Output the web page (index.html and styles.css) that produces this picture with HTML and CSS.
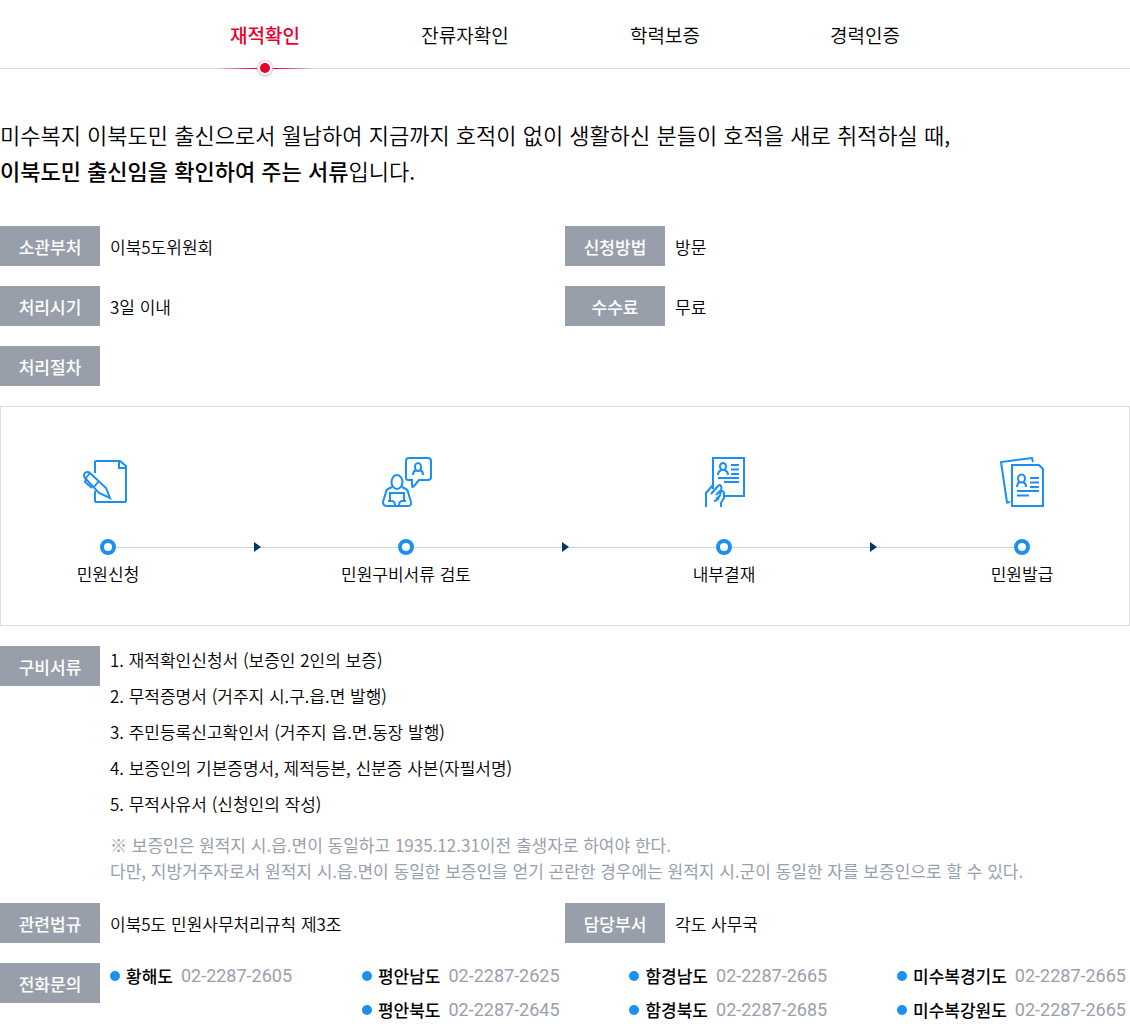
FILE: index.html
```html
<!DOCTYPE html>
<html lang="ko">
<head>
<meta charset="utf-8">
<meta name="viewport" content="width=device-width, initial-scale=1">
<title>재적확인</title>
<link rel="stylesheet" href="styles.css">
</head>
<body>
<nav class="tabs">
  <a class="tab tab-active" href="#residence" aria-current="page">재적확인</a>
  <a class="tab" href="#remaining">잔류자확인</a>
  <a class="tab" href="#education">학력보증</a>
  <a class="tab" href="#career">경력인증</a>
</nav>
<main>
  <p class="intro">미수복지 이북도민 출신으로서 월남하여 지금까지 호적이 없이 생활하신 분들이 호적을 새로 취적하실 때,<br><strong>이북도민 출신임을 확인하여 주는 서류</strong>입니다.</p>

  <dl class="info">
    <div class="row"><dt class="label">소관부처</dt><dd class="value">이북5도위원회</dd></div>
    <div class="row"><dt class="label">신청방법</dt><dd class="value">방문</dd></div>
    <div class="row"><dt class="label">처리시기</dt><dd class="value">3일 이내</dd></div>
    <div class="row"><dt class="label">수수료</dt><dd class="value">무료</dd></div>
  </dl>

  <h2 class="label">처리절차</h2>
  <ol class="process">
    <li class="step">
      <svg class="icon" viewBox="0 0 50 50" aria-hidden="true">
        <path d="M12 16V5q0-1 1-1h24l6 5v35q0 1-1 1H13q-1 0-1-1V34M36 4v7h7"/>
        <path d="M7 16l16 15 4 10-11-5L2 21a3 3 0 1 1 5-5zM7 16l-4 5M15 25l-4 5M3 22l-1 3 7 6"/>
      </svg>
      <span class="dot"></span>
      <span class="step-name">민원신청</span>
    </li>
    <li class="link" aria-hidden="true"></li>
    <li class="step">
      <svg class="icon" viewBox="0 0 50 50" aria-hidden="true">
        <path d="M27 23q-2 0-2-3V4q0-3 3-3h19q3 0 3 3v16q0 3-3 3h-9l-5 6q-2 2-2 0v-6z"/>
        <ellipse cx="37" cy="10" rx="3" ry="4"/>
        <path d="M32 18q0-4 3-5M42 18q0-4-3-5"/>
        <ellipse cx="16" cy="25" rx="5.500" ry="7"/>
        <path d="M11 30l-4 2q-2 1-2 3L2 45q0 4 4 4h21q4 0 3-4l-3-10q0-2-2-3l-4-2"/>
        <path d="M9 44v-8h14v8M7 44h4q3 0 3 5M25 44h-4q-3 0-3 5"/>
      </svg>
      <span class="dot"></span>
      <span class="step-name">민원구비서류 검토</span>
    </li>
    <li class="link" aria-hidden="true"></li>
    <li class="step">
      <svg class="icon" viewBox="0 0 50 50" aria-hidden="true">
        <path d="M14 32V1h31v38H24"/>
        <ellipse cx="24" cy="9.500" rx="3" ry="3.500"/>
        <path d="M19 18q0-4 4-5M29 18q0-4-4-5M32 8h8M32 12.500h8M32 17h8M19 21h21M25 25h15"/>
        <path d="M7 50V36l7-8M12 37l7-8q2-2 3 0t0 4l-5 5M17 42q6-4 4-7M22 50v-4l3-5v-5q-1-3-3-1M15 44q5-1 5-5"/>
      </svg>
      <span class="dot"></span>
      <span class="step-name">내부결재</span>
    </li>
    <li class="link" aria-hidden="true"></li>
    <li class="step">
      <svg class="icon" viewBox="0 0 50 50" aria-hidden="true">
        <path d="M36 5l-1-4L4 5l6 40.500 3-.5M15 8h27l4 4v37H15z"/>
        <ellipse cx="24.500" cy="21.500" rx="3.500" ry="4"/>
        <path d="M20 30q0-4 3-5M29 30q0-4-3-5M33 21h9M33 25.500h9M33 30h9M20 34h22M20 38.500h12"/>
      </svg>
      <span class="dot"></span>
      <span class="step-name">민원발급</span>
    </li>
  </ol>

  <section class="row documents">
    <h2 class="label">구비서류</h2>
    <div>
      <ol class="document-list">
        <li>1. 재적확인신청서 (보증인 2인의 보증)</li>
        <li>2. 무적증명서 (거주지 시.구.읍.면 발행)</li>
        <li>3. 주민등록신고확인서 (거주지 읍.면.동장 발행)</li>
        <li>4. 보증인의 기본증명서, 제적등본, 신분증 사본(자필서명)</li>
        <li>5. 무적사유서 (신청인의 작성)</li>
      </ol>
      <p class="note">※ 보증인은 원적지 시.읍.면이 동일하고 1935.12.31이전 출생자로 하여야 한다.<br>다만, 지방거주자로서 원적지 시.읍.면이 동일한 보증인을 얻기 곤란한 경우에는 원적지 시.군이 동일한 자를 보증인으로 할 수 있다.</p>
    </div>
  </section>

  <dl class="info">
    <div class="row"><dt class="label">관련법규</dt><dd class="value">이북5도 민원사무처리규칙 제3조</dd></div>
    <div class="row"><dt class="label">담당부서</dt><dd class="value">각도 사무국</dd></div>
  </dl>

  <section class="row">
    <h2 class="label">전화문의</h2>
    <div class="phones">
      <ul class="phone-list">
        <li class="phone"><span class="region">황해도</span><a class="number" href="tel:02-2287-2605">02-2287-2605</a></li>
      </ul>
      <ul class="phone-list">
        <li class="phone"><span class="region">평안남도</span><a class="number" href="tel:02-2287-2625">02-2287-2625</a></li>
        <li class="phone"><span class="region">평안북도</span><a class="number" href="tel:02-2287-2645">02-2287-2645</a></li>
      </ul>
      <ul class="phone-list">
        <li class="phone"><span class="region">함경남도</span><a class="number" href="tel:02-2287-2665">02-2287-2665</a></li>
        <li class="phone"><span class="region">함경북도</span><a class="number" href="tel:02-2287-2685">02-2287-2685</a></li>
      </ul>
      <ul class="phone-list">
        <li class="phone"><span class="region">미수복경기도</span><a class="number" href="tel:02-2287-2665">02-2287-2665</a></li>
        <li class="phone"><span class="region">미수복강원도</span><a class="number" href="tel:02-2287-2665">02-2287-2665</a></li>
      </ul>
    </div>
  </section>
</main>
</body>
</html>
```
FILE: styles.css
```css
* { box-sizing: border-box; }

body, p, dl, dd, ol, ul, h2 { margin: 0; padding: 0; }

body {
  background: #fff;
  color: #000;
  font-family: "Noto Sans CJK KR", "Noto Sans", sans-serif;
  font-size: 17px;
  font-weight: 350;
  line-height: 26px;
}

ol, ul { list-style: none; }
a { color: inherit; text-decoration: none; }

.tabs {
  display: flex;
  justify-content: center;
  border-bottom: 1px solid #d7dfe1;
}

.tab {
  position: relative;
  width: 200px;
  height: 68px;
  font-size: 19px;
  line-height: 70px;
  text-align: center;
}

.tab-active { color: #e6002d; font-weight: 500; }

.tab-active::before {
  content: "";
  position: absolute;
  left: 50px;
  right: 50px;
  bottom: -1px;
  height: 1px;
  background: linear-gradient(to right, transparent, #e6002d 40%, #e6002d 60%, transparent);
}

.tab-active::after {
  content: "";
  position: absolute;
  left: 95px;
  bottom: -5px;
  width: 10px;
  height: 10px;
  border-radius: 50%;
  background: #e6002d;
  box-shadow: 0 0 0 2px #fff, 0 0 0 3px #f7c6cf, 0 1px 2px 3px #0002;
}

.intro {
  padding: 47px 0 38px;
  font-size: 22px;
  line-height: 36px;
}

.intro strong { font-weight: 500; }

.info {
  display: grid;
  grid-template-columns: 1fr 1fr;
  gap: 20px 0;
  margin-bottom: 20px;
}

.row { display: flex; align-items: flex-start; gap: 10px; }

.label {
  flex: none;
  width: 100px;
  height: 40px;
  background: #989fab;
  color: #fff;
  font-size: 17px;
  font-weight: 500;
  line-height: 42px;
  text-align: center;
}

.value { height: 40px; line-height: 42px; }

.process {
  display: grid;
  grid-template-columns: 64px 234fr 64px 254fr 64px 234fr 64px;
  margin: 20px 0;
  padding: 50px 75px 38px;
  border: 1px solid #d9dfe1;
}

.step {
  position: relative;
  z-index: 1;
  display: flex;
  flex-direction: column;
  align-items: center;
}

.icon {
  width: 50px;
  height: 50px;
  margin-bottom: 32px;
  overflow: visible;
  fill: none;
  stroke: #1b8ff2;
  stroke-width: 2;
}

.dot {
  width: 16px;
  height: 16px;
  border: 4px solid #1b8ff2;
  border-radius: 50%;
  background: #fff;
}

.step-name { margin-top: 6px; white-space: nowrap; }

.link {
  display: flex;
  align-items: center;
  justify-content: center;
  height: 16px;
  margin: 82px -24px 0;
  background: linear-gradient(#cfd5d7, #cfd5d7) center / 100% 1px no-repeat;
}

.link::before {
  content: "";
  border: 5px solid transparent;
  border-left: 7px solid #003764;
  border-right: 0;
}

.documents { margin-bottom: 19px; }
.document-list { margin-top: -4px; line-height: 36px; }
.note { margin-top: 10px; color: #98a0ad; font-weight: 400; }

.phones {
  display: flex;
  flex: 1;
  justify-content: space-between;
  padding-right: 4px;
}

.phone-list { display: grid; align-content: start; gap: 8px; }
.phone { display: flex; align-items: center; }

.phone::before {
  content: "";
  width: 10px;
  height: 10px;
  margin-right: 6px;
  border-radius: 50%;
  background: #1b8ff2;
}

.region { margin-right: 8px; font-weight: 500; }
.number { color: #98a0ad; font-family: Roboto, sans-serif; font-size: 18px; font-weight: 400; }
```
